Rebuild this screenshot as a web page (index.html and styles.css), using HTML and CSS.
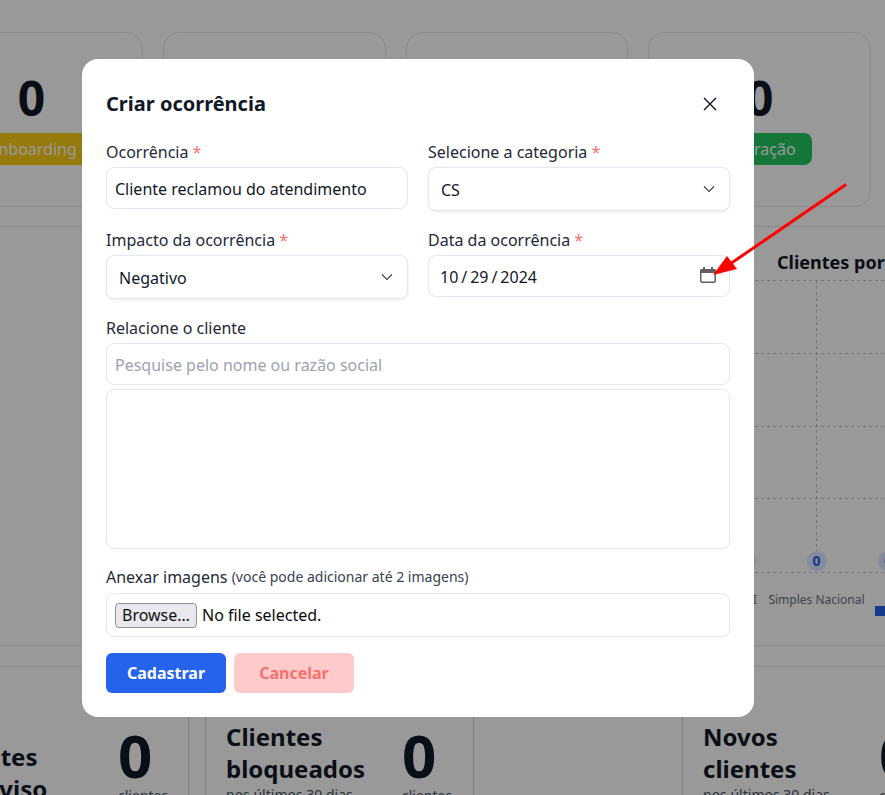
FILE: index.html
```html
<!DOCTYPE html>
<html lang="pt-BR">
<head>
<meta charset="utf-8">
<title>Criar ocorrência</title>
<link rel="stylesheet" href="styles.css">
</head>
<body>
<main class="dashboard">
  <section class="stats">
    <div class="stat-card"><div class="stat-num">0</div><span class="badge badge-yellow">Onboarding</span></div>
    <div class="stat-card"></div>
    <div class="stat-card"></div>
    <div class="stat-card"><div class="stat-num">0</div><span class="badge badge-green">Migração</span></div>
  </section>
  <section class="chart-section">
    <div class="chart-panel">
      <h2 class="chart-title">Clientes por regime</h2>
      <svg class="chart" width="143" height="350" viewBox="0 0 143 350">
        <g class="grid-line">
          <line x1="0" x2="143" y1="1.5" y2="1.5"/>
          <line x1="0" x2="143" y1="74.5" y2="74.5"/>
          <line x1="0" x2="143" y1="147.5" y2="147.5"/>
          <line x1="0" x2="143" y1="219.5" y2="219.5"/>
          <line x1="0" x2="143" y1="293.5" y2="293.5"/>
          <line x1="61.5" x2="61.5" y1="1" y2="272"/>
        </g>
        <circle class="dot" cx="-9" cy="282" r="10"/>
        <circle class="dot" cx="62" cy="282" r="10"/>
        <circle class="dot" cx="133" cy="282" r="10"/>
        <text class="dot-label" x="61.5" y="287" text-anchor="middle">0</text>
        <text class="dot-label" x="133" y="287" text-anchor="middle">0</text>
        <text class="axis-label" x="-9" y="325" text-anchor="middle">MEI</text>
        <text class="axis-label" x="61.5" y="325" text-anchor="middle">Simples Nacional</text>
        <rect class="legend" x="120" y="327" width="20" height="10"/>
      </svg>
    </div>
  </section>
  <section class="bottom">
    <div class="bottom-card bottom-a">
      <div class="bottom-text"><h3 class="bottom-title">Clientes em aviso</h3></div>
      <div class="bottom-count"><div class="big-num">0</div><div class="big-unit">clientes</div></div>
    </div>
    <div class="bottom-card bottom-b">
      <div class="bottom-text"><h3 class="bottom-title">Clientes bloqueados</h3><p class="bottom-sub">nos últimos 30 dias</p></div>
      <div class="bottom-count"><div class="big-num">0</div><div class="big-unit">clientes</div></div>
    </div>
    <div class="bottom-card bottom-c"></div>
    <div class="bottom-card bottom-d">
      <div class="bottom-text"><h3 class="bottom-title">Novos clientes</h3><p class="bottom-sub">nos últimos 30 dias</p></div>
      <div class="bottom-count"><div class="big-num">0</div><div class="big-unit">clientes</div></div>
    </div>
  </section>
</main>

<div class="overlay">
  <form class="modal">
    <header class="modal-head">
      <h1 class="modal-title">Criar ocorrência</h1>
      <button type="button" class="close" aria-label="Fechar">
        <svg width="14" height="14" viewBox="0 0 14 14"><path d="M1 1l12 12M13 1L1 13"/></svg>
      </button>
    </header>
    <div class="form-grid">
      <div class="field">
        <label class="label">Ocorrência <span class="req">*</span></label>
        <input class="control" type="text" value="Cliente reclamou do atendimento">
      </div>
      <div class="field">
        <label class="label">Selecione a categoria <span class="req">*</span></label>
        <div class="select"><span>CS</span>
          <svg width="12" height="8" viewBox="0 0 12 8"><path d="M1 1.5l5 5 5-5"/></svg>
        </div>
      </div>
      <div class="field">
        <label class="label">Impacto da ocorrência <span class="req">*</span></label>
        <div class="select"><span>Negativo</span>
          <svg width="12" height="8" viewBox="0 0 12 8"><path d="M1 1.5l5 5 5-5"/></svg>
        </div>
      </div>
      <div class="field">
        <label class="label">Data da ocorrência <span class="req">*</span></label>
        <div class="date"><span class="date-value">10 / 29 / 2024</span>
          <svg width="16" height="16" viewBox="0 0 16 16"><path class="cal-fill" d="M3 0h2v2h6V0h2v2h1a2 2 0 0 1 2 2v2H0V4a2 2 0 0 1 2-2h1z"/><path class="cal-line" d="M2 2.8h12a1.2 1.2 0 0 1 1.2 1.2v10a1.2 1.2 0 0 1-1.2 1.2H2A1.2 1.2 0 0 1 .8 14V4A1.2 1.2 0 0 1 2 2.8z"/></svg>
        </div>
      </div>
    </div>
    <div class="field field-client">
      <label class="label">Relacione o cliente</label>
      <input class="control" type="text" placeholder="Pesquise pelo nome ou razão social">
      <textarea class="textarea"></textarea>
    </div>
    <div class="field field-attach">
      <label class="label label-attach">Anexar imagens <small class="hint">(você pode adicionar até 2 imagens)</small></label>
      <div class="file"><button type="button" class="browse">Browse…</button><span>No file selected.</span></div>
    </div>
    <div class="actions">
      <button type="button" class="btn btn-primary">Cadastrar</button>
      <button type="button" class="btn btn-cancel">Cancelar</button>
    </div>
  </form>
</div>

<svg class="arrow" width="885" height="795" viewBox="0 0 885 795">
  <line x1="846" y1="184.5" x2="730" y2="264"/>
  <polygon points="713,275 727,256 737,269"/>
</svg>
</body>
</html>
```

FILE: styles.css
```css
* { box-sizing: border-box; }
html, body { margin: 0; height: 100%; }
body {
  background: #fff;
  color: #111827;
  font-family: "Noto Sans", sans-serif;
  overflow: hidden;
}
h1, h2, h3, p { margin: 0; }

.dashboard { height: 795px; overflow: hidden; padding-top: 32px; }

.stats { display: flex; gap: 20px; margin-left: -80px; }
.stat-card {
  flex: none;
  width: 222.75px;
  height: 175px;
  border: 1px solid #e5e7eb;
  border-radius: 16px;
  text-align: center;
  padding-top: 33px;
}
.stat-num { font-size: 48px; font-weight: 700; line-height: 64px; color: #111827; }
.badge {
  display: inline-block;
  margin-top: 3px;
  padding: 4px 16px;
  border-radius: 8px;
  color: #fff;
  font-size: 16px;
  line-height: 24px;
}
.badge-yellow { background: #facc15; }
.badge-green { background: #22c55e; margin-left: 2px; }

.chart-section {
  margin-top: 19px;
  height: 420px;
  border-top: 1px solid #e5e7eb;
  border-bottom: 1px solid #e5e7eb;
}
.chart-panel { margin-left: 755px; padding-top: 21px; }
.chart-title {
  margin-left: 22px;
  font-size: 18px;
  line-height: 28px;
  font-weight: 700;
  white-space: nowrap;
  color: #111827;
}
.chart { display: block; margin-top: 3px; overflow: visible; }
.grid-line line { stroke: #c4c4c4; stroke-dasharray: 3 3; stroke-width: 1; }
.dot { fill: #dbeafe; }
.dot-label { font: 700 14px "Noto Sans", sans-serif; fill: #2563eb; }
.axis-label { font: 12px "Noto Sans", sans-serif; fill: #6b7280; }
.legend { fill: #2563eb; }

.bottom {
  display: flex;
  height: 139px;
  margin-top: 20px;
  border-top: 1px solid #e5e7eb;
}
.bottom-card { flex: none; display: flex; align-items: flex-end; }
.bottom-a { width: 189px; border-right: 1px solid #d1d5db; }
.bottom-b { width: 268px; margin-left: 16px; padding-left: 20px; border-left: 1px solid #d1d5db; }
.bottom-c { width: 209px; border-left: 1px solid #d1d5db; }
.bottom-d { width: 220px; padding-left: 20px; border-left: 1px solid #d1d5db; }
.bottom-text { width: 176px; flex: none; }
.bottom-a .bottom-text { margin-left: -59px; width: 177px; }
.bottom-title { max-width: 150px; font-size: 24px; line-height: 32px; font-weight: 700; color: #111827; }
.bottom-a .bottom-title { max-width: 125px; }
.bottom-sub { font-size: 14px; line-height: 20px; color: #4b5563; white-space: nowrap; }
.big-num { font-size: 60px; font-weight: 700; line-height: 62px; color: #111827; }
.big-unit { font-size: 14px; line-height: 20px; color: #4b5563; }
.bottom-count { align-self: flex-start; margin-top: 57px; }

.overlay {
  position: fixed;
  inset: 0;
  background: rgba(0, 0, 0, 0.4);
}
.modal {
  position: absolute;
  left: 82px;
  top: 59px;
  width: 672px;
  height: 658px;
  padding: 24px;
  background: #fff;
  border-radius: 16px;
}
.modal-head {
  display: flex;
  align-items: center;
  justify-content: space-between;
  height: 42px;
  margin-bottom: 15px;
}
.modal-title { font-size: 20px; line-height: 42px; font-weight: 700; color: #111827; }
.close { display: flex; padding: 0; margin-right: 13px; background: none; border: 0; }
.close path { stroke: #111827; stroke-width: 1.4; fill: none; }

.form-grid {
  display: grid;
  grid-template-columns: 302px 302px;
  column-gap: 20px;
  row-gap: 17px;
  align-items: start;
}
.field { display: flex; flex-direction: column; }
.label { height: 24px; font-size: 16px; line-height: 24px; color: #1f2937; margin-bottom: 3px; }
.label-attach { margin-bottom: 4px; }
.req { color: #f87171; }
.hint { font-size: 14px; color: #374151; vertical-align: 1px; }

.control, .textarea, .select, .date, .file {
  width: 100%;
  border: 1px solid #e2e8f0;
  border-radius: 8px;
  background: #fff;
  color: #111827;
  font: 16px/24px "Noto Sans", sans-serif;
}
.control { height: 42px; padding: 2px 8px 0; outline: 0; }
.control::placeholder { color: #9ca3af; opacity: 1; }
.textarea { display: block; height: 160px; margin-top: 4px; resize: none; outline: 0; }

.select {
  height: 44px;
  display: flex;
  align-items: center;
  justify-content: space-between;
  padding: 2px 14px 0 12px;
  box-shadow: 0 1px 3px rgba(0, 0, 0, 0.08);
}
.select svg { margin-top: -2px; }
.select path { stroke: #374151; stroke-width: 1.1; fill: none; }

.date {
  height: 42px;
  display: flex;
  align-items: center;
  justify-content: space-between;
  padding: 2px 13px 0 11px;
}
.date svg { margin-top: -5px; }
.date-value { word-spacing: -1.2px; }
.cal-fill { fill: #5f5f5f; }
.cal-line { fill: none; stroke: #5f5f5f; stroke-width: 1.5; }

.field-client { margin-top: 17px; }
.field-attach { margin-top: 16px; }

.file {
  height: 44px;
  display: flex;
  align-items: center;
  gap: 5px;
  padding: 0 8px;
  color: #0b0b0b;
}
.browse {
  height: 25px;
  padding: 0 6px;
  border: 1px solid #8f8f9d;
  border-radius: 4px;
  background: #e9e9ed;
  color: #111;
  font: 16px "Noto Sans", sans-serif;
}

.actions { display: flex; gap: 8px; margin-top: 16px; }
.btn {
  width: 120px;
  height: 40px;
  border: 0;
  border-radius: 6px;
  font: 700 16px "Noto Sans", sans-serif;
}
.btn-primary { background: #2563eb; color: #fff; }
.btn-cancel { background: #fecaca; color: #f87171; }

.arrow { position: fixed; left: 0; top: 0; pointer-events: none; }
.arrow line { stroke: #ff0000; stroke-width: 3; }
.arrow polygon { fill: #ff0000; }
```
